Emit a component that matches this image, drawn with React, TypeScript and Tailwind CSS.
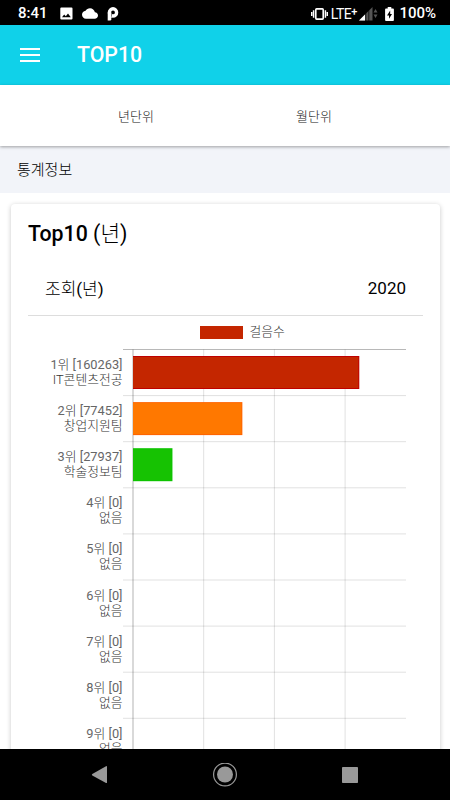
interface Rank {
  rank: number;
  steps: number;
  team: string;
  color: string;
  border: string;
}

const EMPTY = '없음';

const ranks: Rank[] = [
  { rank: 1, steps: 160263, team: 'IT콘텐츠전공', color: '#c42600', border: '#bf0000' },
  { rank: 2, steps: 77452, team: '창업지원팀', color: '#ff7800', border: '#ff6400' },
  { rank: 3, steps: 27937, team: '학술정보팀', color: '#16c202', border: '#0cc400' },
  ...[4, 5, 6, 7, 8, 9].map((rank) => ({
    rank,
    steps: 0,
    team: EMPTY,
    color: '#16c202',
    border: '#0cc400',
  })),
];

const AXIS_X = 122;
const AXIS_RIGHT = 395;
const TOP = 33.5;
const ROW = 46.1;
const PX_PER_STEP = 70.6 / 50000;

function StatusBar() {
  return (
    <div className="flex h-[25px] shrink-0 items-center bg-black pl-[18px] pr-[14px] pt-[2px] text-[15px] font-medium leading-none text-white">
      <span className="w-[42px]">8:41</span>
      <svg className="h-[13px] w-[13px]" viewBox="0 0 13 13" fill="#fff">
        <path
          fillRule="evenodd"
          d="M1.3 0.5h10.2a1 1 0 0 1 1 1v10a1 1 0 0 1-1 1H1.3a1 1 0 0 1-1-1v-10a1 1 0 0 1 1-1zM2 10.3h8.8L8 6.4 5.8 9.2 4.2 7.4z"
        />
      </svg>
      <svg className="ml-[9px] h-[11px] w-[16px]" viewBox="0 4 24 16" fill="#fff">
        <path d="M19.35 10.04C18.67 6.59 15.64 4 12 4 9.11 4 6.6 5.64 5.35 8.04 2.34 8.36 0 10.91 0 14c0 3.31 2.69 6 6 6h13c2.76 0 5-2.24 5-5 0-2.64-2.05-4.78-4.65-4.96z" />
      </svg>
      <svg className="ml-[9px] h-[14px] w-[12px]" viewBox="0 0 12 14">
        <circle cx="6" cy="5.4" r="3.6" fill="none" stroke="#fff" strokeWidth="3.4" />
        <path d="M0.7 5.4h3.6v6.8q0 1.3-1.3 1.3h-2.3z" fill="#fff" />
        <path d="M4.5 6.5v3.2" stroke="#000" strokeWidth="0.5" />
      </svg>
      <svg className="ml-auto h-[12px] w-[17px]" viewBox="0 0 17 12" fill="none" stroke="#fff">
        <rect x="4.8" y="0.9" width="7.4" height="10.2" rx="0.8" strokeWidth="1.6" />
        <path d="M2.6 2.2v7.6M14.4 2.2v7.6M0.7 4v4M16.3 4v4" strokeWidth="1.5" />
      </svg>
      <span className="ml-[3px] text-[14px] font-normal tracking-[-0.5px]">LTE</span>
      <span className="mb-[5px] text-[11px]">+</span>
      <svg className="ml-[2px] h-[14px] w-[19px]" viewBox="0 0 19 14">
        <path d="M0 13.5L13.5 0v13.5z" fill="#555" />
        <path d="M0 13.5L6 7.5v6z" fill="#fff" />
        <path d="M6.8 6v8M9.8 3v11" stroke="#000" strokeWidth="0.7" />
        <path d="M14.5 5.5l2-3.5 2 3.5zM14.5 7.5h4l-2 3.5z" fill="#555" />
      </svg>
      <svg className="ml-[7px] h-[14px] w-[9px]" viewBox="0 0 9 14">
        <path d="M2.7 0h3.6v1.5H8a.9.9 0 0 1 .9.9v10.7a.9.9 0 0 1-.9.9H1a.9.9 0 0 1-.9-.9V2.4A.9.9 0 0 1 1 1.5h1.7z" fill="#fff" />
        <path d="M5.2 3.6L2 8.4h2v3.4l3-4.9H5.2z" fill="#000" />
      </svg>
      <span className="ml-[5px]">100%</span>
    </div>
  );
}

function StepsChart() {
  return (
    <svg className="block h-[460px] w-[429px] shrink-0" viewBox="0 0 429 460" fontSize="12.8" fill="#666">
      <rect x="189.5" y="10.5" width="42" height="12" fill="#c42600" stroke="#c42600" />
      <text x="238.5" y="20" className="fill-[#333] font-light">
        걸음수
      </text>

      {[1, 2, 3].map((i) => (
        <path key={i} d={`M${AXIS_X + i * 70.7} ${TOP}V460`} stroke="#000" strokeOpacity="0.12" />
      ))}
      {ranks.map((r, i) => (
        <path
          key={r.rank}
          d={`M${AXIS_X - 10} ${TOP + i * ROW}H${AXIS_RIGHT}`}
          stroke="#000"
          strokeOpacity={i === 0 ? 0.28 : 0.12}
        />
      ))}
      <path d={`M${AXIS_X} ${TOP}V460`} stroke="#000" strokeOpacity="0.3" />

      {ranks.map((r, i) => {
        const y = TOP + i * ROW;
        const width = r.steps * PX_PER_STEP;
        return (
          <g key={r.rank}>
            {r.steps > 0 && (
              <>
                <rect x={AXIS_X} y={y + 6.5} width={width} height="33" fill={r.border} />
                <rect x={AXIS_X} y={y + 7.5} width={width - 1} height="31" fill={r.color} />
              </>
            )}
            <text x="111.5" y={y + 19.5} textAnchor="end">
              {r.rank}
              <tspan className="fill-[#333] font-light">위</tspan>
              {` [${r.steps}]`}
            </text>
            <text x="111.5" y={y + 34.5} textAnchor="end" className="fill-[#333] font-light">
              {r.team}
            </text>
          </g>
        );
      })}
    </svg>
  );
}

export default function App() {
  return (
    <div className="flex h-[800px] w-[450px] flex-col overflow-hidden bg-white font-[Roboto,'Noto_Sans_CJK_KR',sans-serif] text-black">
      <StatusBar />

      <header className="flex h-[60px] shrink-0 items-center bg-[#10d1e9] pl-5 text-white">
        <svg className="h-[14px] w-5" viewBox="0 0 20 14" fill="none" stroke="#fff" strokeWidth="2">
          <path d="M0 1h20M0 7h20M0 13h20" />
        </svg>
        <h1 className="ml-[37px] text-[21.3px] font-medium leading-none">TOP10</h1>
      </header>

      <nav className="z-10 flex h-[61px] shrink-0 items-center justify-center bg-white pt-[2px] text-[13px] font-light text-[#222] shadow-[0_1px_3px_rgba(0,0,0,0.35)]">
        <span className="w-[178px] text-center">년단위</span>
        <span className="w-[178px] text-center">월단위</span>
      </nav>

      <div className="flex h-[47px] shrink-0 items-center bg-[#f2f4f9] pl-[17px] pt-[2px] text-[15px] font-light">
        통계정보
      </div>

      <main className="min-h-0 flex-1 overflow-hidden px-[11px] pt-[11px]">
        <section className="flex h-[600px] w-[429px] flex-col rounded bg-white shadow-[0_1px_5px_rgba(0,0,0,0.22)]">
          <h2 className="flex h-[58px] shrink-0 items-center pl-[17px] pt-[2px] text-[21.3px] font-medium">
            <span className="whitespace-pre">Top10 </span>
            <span className="font-normal">(</span>
            <span className="font-light">년</span>
            <span className="font-normal">)</span>
          </h2>
          <div className="mx-[17px] flex h-[54px] shrink-0 items-center justify-between border-b border-[#ddd] px-[17px] text-[17px]">
            <span className="pt-[2px]">
              <span className="font-light">조회</span>(<span className="font-light">년</span>)
            </span>
            <span>2020</span>
          </div>
          <StepsChart />
        </section>
      </main>

      <footer className="flex h-[51px] shrink-0 items-center justify-center bg-black">
        <svg className="h-[24px] w-[268px]" viewBox="0 0 268 24" fill="#999">
          <path d="M1.3 11L15 3.2q1-.5 1 .6v15.6q0 1-1 .5L1.3 12.4q-1-.7 0-1.4z" />
          <circle cx="134" cy="11.5" r="8" />
          <circle cx="134" cy="11.5" r="11.4" fill="none" stroke="#999" strokeWidth="1.2" />
          <rect x="251" y="4" width="16" height="16" rx="0.8" />
        </svg>
      </footer>
    </div>
  );
}
